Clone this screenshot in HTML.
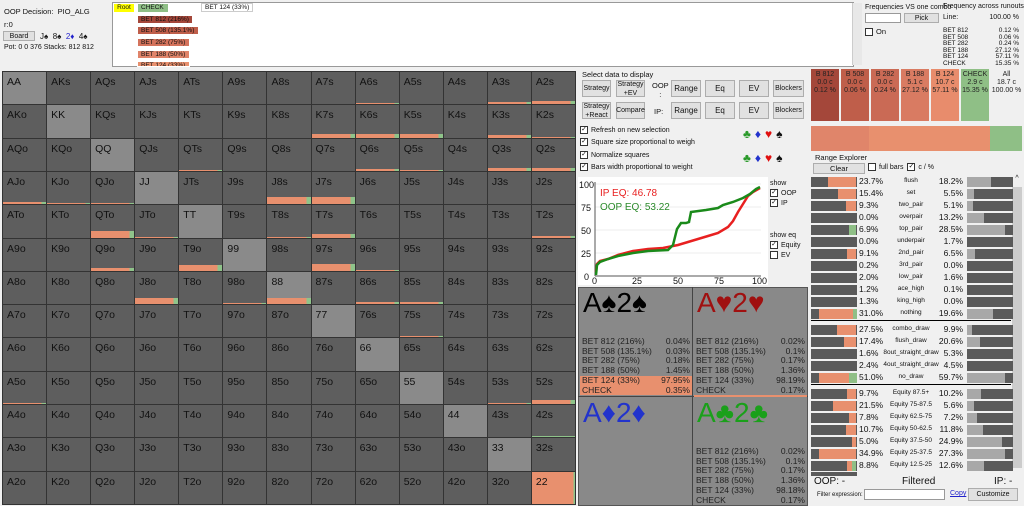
<!DOCTYPE html>
<html><head><meta charset="utf-8"><style>
*{margin:0;padding:0;box-sizing:border-box;white-space:nowrap}
body{width:1024px;height:506px;overflow:hidden;background:#f0f0f0;font-family:"Liberation Sans",sans-serif;font-size:9px;color:#111;position:relative}
.a{position:absolute}
#grid{position:absolute;left:2px;top:71px;width:574px;height:434px;background:#333;display:grid;grid-template-columns:repeat(13,1fr);grid-template-rows:repeat(13,1fr);gap:1px;border:1px solid #333}
#grid div{background:#5e5e5e;position:relative;font-size:10.5px;padding:4px 0 0 4px;color:#111}
#grid div.p{background:#8a8a8a}
#grid i{position:absolute;left:0;right:0;bottom:0;background:linear-gradient(to right,#e8906e 0 90%,#8fc48a 90%)}
.btn{position:absolute;background:#e1e1e1;border:1px solid #adadad;font-size:8px;text-align:center;display:flex;align-items:center;justify-content:center;line-height:9px}
.cb{display:inline-block;width:8px;height:8px;border:1px solid #333;background:#fff;vertical-align:middle;margin-right:3px;font-size:7px;line-height:6px;text-align:center}
.col{position:absolute;top:69px;height:52px;width:28px;text-align:center;font-size:7px;line-height:8px;padding-top:2px;color:#222;overflow:hidden}
.re{position:absolute;left:811px;width:200px;height:11px;font-size:8.5px}
.re .l{position:absolute;left:0;top:1px;width:46px;height:10px;background:#5a5a5a}
.re .r{position:absolute;left:156px;top:1px;width:46px;height:10px;background:#5a5a5a}
.re .t1{position:absolute;left:48px;top:0}
.re .t2{position:absolute;left:75px;width:50px;text-align:center;top:1px;font-size:6.5px;display:flex;justify-content:center}
.re .t3{position:absolute;right:48px;top:0}
.card{position:absolute;font-size:8.5px;color:#222;line-height:9.7px}
.card div{display:flex;justify-content:space-between;padding:0 2px 0 2px}
.tb{position:absolute;height:9px;border:1px solid #fff;font-size:6.5px;padding-left:3px;line-height:8px;overflow:hidden}
</style></head><body>
<!-- header -->
<div class="a" style="left:4px;top:7px;font-size:7.5px">OOP Decision:&nbsp; PIO_ALG</div>
<div class="a" style="left:4px;top:20px;font-size:7.5px">r:0</div>
<div class="btn" style="left:3px;top:31px;width:32px;height:10px;font-size:7px">Board</div>
<div class="a" style="left:40px;top:32px;font-size:8px">J♠&nbsp; 8♠&nbsp; <span style="color:#22c">2♦</span>&nbsp; 4♠</div>
<div class="a" style="left:4px;top:44px;font-size:7px">Pot: 0 0 376 Stacks: 812 812</div>
<div class="a" style="left:112px;top:2px;width:742px;height:65px;background:#fff;border:1px solid #999"></div>
<div class="a" style="left:114px;top:4px;width:20px;height:8px;background:#ff0;font-size:6.5px;text-align:center;line-height:8px">Root</div>
<div class="a" style="left:138px;top:4px;width:30px;height:8px;background:#8fbf86;font-size:6.5px;padding-left:3px;line-height:8px">CHECK</div>
<div class="a" style="left:201px;top:3px;width:52px;height:9px;background:#fff;border:1px solid #ccc;font-size:6.5px;padding-left:3px;line-height:8px">BET 124 (33%)</div>
<div class="tb" style="left:137px;top:15px;width:56px;background:#a4473a">BET 812 (216%)</div>
<div class="tb" style="left:137px;top:26px;width:62px;background:#bf5e4a">BET 508 (135.1%)</div>
<div class="tb" style="left:137px;top:38px;width:53px;background:#d4735c">BET 282 (75%)</div>
<div class="tb" style="left:137px;top:50px;width:53px;background:#e0846a">BET 188 (50%)</div>
<div class="tb" style="left:137px;top:61px;width:53px;height:6px;background:#e8906e">BET 124 (33%)</div>
<div class="a" style="left:852px;top:3px;width:10px;height:62px;background:#e8e8e8;border-left:1px solid #ccc"></div>
<div class="a" style="left:865px;top:4px;font-size:7px">Frequencies VS one combo</div>
<div class="a" style="left:865px;top:13px;width:36px;height:10px;background:#fff;border:1px solid #999"></div>
<div class="btn" style="left:904px;top:13px;width:35px;height:10px;font-size:7px">Pick</div>
<div class="a" style="left:865px;top:27px;font-size:7.5px"><span class="cb"></span>On</div>
<div class="a" style="left:943px;top:3px;font-size:7px">Frequency across runouts:</div>
<div class="a" style="left:943px;top:14px;width:76px;font-size:7px;display:flex;justify-content:space-between"><span>Line:</span><span>100.00 %</span></div>
<div class="a" style="left:943px;top:28px;width:76px;font-size:6.5px;line-height:6.5px">
<div style="display:flex;justify-content:space-between"><span>BET 812</span><span>0.12 %</span></div>
<div style="display:flex;justify-content:space-between"><span>BET 508</span><span>0.06 %</span></div>
<div style="display:flex;justify-content:space-between"><span>BET 282</span><span>0.24 %</span></div>
<div style="display:flex;justify-content:space-between"><span>BET 188</span><span>27.12 %</span></div>
<div style="display:flex;justify-content:space-between"><span>BET 124</span><span>57.11 %</span></div>
<div style="display:flex;justify-content:space-between"><span>CHECK</span><span>15.35 %</span></div></div>

<!-- grid -->
<div id="grid">
<div class="p">AA</div><div>AKs</div><div>AQs</div><div>AJs</div><div>ATs</div><div>A9s</div><div>A8s</div><div>A7s</div><div>A6s<i style="height:1px"></i></div><div>A5s</div><div>A4s</div><div>A3s<i style="height:2px"></i></div><div>A2s<i style="height:3px"></i></div>
<div>AKo</div><div class="p">KK</div><div>KQs</div><div>KJs</div><div>KTs</div><div>K9s</div><div>K8s</div><div>K7s<i style="height:4px"></i></div><div>K6s<i style="height:4px"></i></div><div>K5s<i style="height:4px"></i></div><div>K4s</div><div>K3s<i style="height:3px"></i></div><div>K2s<i style="height:1px"></i></div>
<div>AQo</div><div>KQo</div><div class="p">QQ</div><div>QJs</div><div>QTs<i style="height:1px"></i></div><div>Q9s</div><div>Q8s</div><div>Q7s</div><div>Q6s<i style="height:2px"></i></div><div>Q5s<i style="height:1px"></i></div><div>Q4s</div><div>Q3s<i style="height:3px"></i></div><div>Q2s<i style="height:3px"></i></div>
<div>AJo<i style="height:2px"></i></div><div>KJo<i style="height:1px"></i></div><div>QJo<i style="height:1px"></i></div><div class="p">JJ</div><div>JTs</div><div>J9s</div><div>J8s<i style="height:7px"></i></div><div>J7s<i style="height:7px"></i></div><div>J6s</div><div>J5s</div><div>J4s</div><div>J3s</div><div>J2s</div>
<div>ATo</div><div>KTo</div><div>QTo<i style="height:7px"></i></div><div>JTo<i style="height:1px"></i></div><div class="p">TT</div><div>T9s</div><div>T8s<i style="height:1px"></i></div><div>T7s<i style="height:4px"></i></div><div>T6s</div><div>T5s</div><div>T4s</div><div>T3s</div><div>T2s<i style="height:2px"></i></div>
<div>A9o</div><div>K9o</div><div>Q9o<i style="height:3px"></i></div><div>J9o</div><div>T9o<i style="height:6px"></i></div><div class="p">99</div><div>98s</div><div>97s<i style="height:7px"></i></div><div>96s<i style="height:1px"></i></div><div>95s</div><div>94s</div><div>93s</div><div>92s</div>
<div>A8o</div><div>K8o</div><div>Q8o</div><div>J8o<i style="height:6px"></i></div><div>T8o</div><div>98o<i style="height:1px"></i></div><div class="p">88<i style="height:6px"></i></div><div>87s</div><div>86s<i style="height:2px"></i></div><div>85s<i style="height:2px"></i></div><div>84s</div><div>83s</div><div>82s</div>
<div>A7o</div><div>K7o</div><div>Q7o</div><div>J7o</div><div>T7o</div><div>97o</div><div>87o</div><div class="p">77</div><div>76s</div><div>75s<i style="height:1px"></i></div><div>74s</div><div>73s</div><div>72s</div>
<div>A6o</div><div>K6o</div><div>Q6o</div><div>J6o</div><div>T6o</div><div>96o</div><div>86o</div><div>76o</div><div class="p">66</div><div>65s</div><div>64s</div><div>63s</div><div>62s</div>
<div>A5o<i style="height:1px"></i></div><div>K5o</div><div>Q5o</div><div>J5o</div><div>T5o</div><div>95o</div><div>85o</div><div>75o</div><div>65o</div><div class="p">55</div><div>54s</div><div>53s<i style="height:1px"></i></div><div>52s<i style="height:4px"></i></div>
<div>A4o</div><div>K4o</div><div>Q4o</div><div>J4o</div><div>T4o</div><div>94o</div><div>84o</div><div>74o</div><div>64o</div><div>54o</div><div class="p">44</div><div>43s</div><div>42s<i style="height:1px;background:#8fc48a"></i></div>
<div>A3o</div><div>K3o</div><div>Q3o</div><div>J3o</div><div>T3o</div><div>93o</div><div>83o</div><div>73o</div><div>63o</div><div>53o</div><div>43o</div><div class="p">33</div><div>32s</div>
<div>A2o</div><div>K2o</div><div>Q2o</div><div>J2o</div><div>T2o</div><div>92o</div><div>82o</div><div>72o</div><div>62o</div><div>52o</div><div>42o</div><div>32o</div><div style="background:linear-gradient(to right,#e8906e 0 96%,#8fc48a 96%)">22</div>
</div>

<!-- middle panel -->
<div class="a" style="left:582px;top:70px;font-size:7.5px">Select data to display</div>
<div class="btn" style="left:582px;top:80px;width:29px;height:17px;font-size:7px">Strategy</div>
<div class="btn" style="left:616px;top:80px;width:29px;height:17px;font-size:7px">Strategy<br>+EV</div>
<div class="a" style="left:652px;top:81px;font-size:7.5px;text-align:center">OOP<br>:</div>
<div class="btn" style="left:671px;top:80px;width:30px;height:17px">Range</div>
<div class="btn" style="left:705px;top:80px;width:30px;height:17px">Eq</div>
<div class="btn" style="left:739px;top:80px;width:30px;height:17px">EV</div>
<div class="btn" style="left:773px;top:80px;width:31px;height:17px;font-size:7px">Blockers</div>
<div class="btn" style="left:582px;top:102px;width:29px;height:17px;font-size:7px">Strategy<br>+React</div>
<div class="btn" style="left:616px;top:102px;width:29px;height:17px;font-size:7px">Compare</div>
<div class="a" style="left:654px;top:107px;font-size:7.5px">IP:</div>
<div class="btn" style="left:671px;top:102px;width:30px;height:17px">Range</div>
<div class="btn" style="left:705px;top:102px;width:30px;height:17px">Eq</div>
<div class="btn" style="left:739px;top:102px;width:30px;height:17px">EV</div>
<div class="btn" style="left:773px;top:102px;width:31px;height:17px;font-size:7px">Blockers</div>
<div class="a" style="left:580px;top:125px;font-size:7px;line-height:12.3px">
<div><span class="cb">✓</span>Refresh on new selection</div>
<div><span class="cb">✓</span>Square size proportional to weigh</div>
<div><span class="cb">✓</span>Normalize squares</div>
<div><span class="cb">✓</span>Bars width proportional to weight</div></div>
<div class="a" style="left:743px;top:127px;font-size:12px;letter-spacing:4px"><span style="color:#2a9a2a">♣</span><span style="color:#2233cc">♦</span><span style="color:#e01010">♥</span><span>♠</span></div>
<div class="a" style="left:743px;top:151px;font-size:12px;letter-spacing:4px"><span style="color:#2a9a2a">♣</span><span style="color:#2233cc">♦</span><span style="color:#e01010">♥</span><span>♠</span></div>
<svg class="a" style="left:578px;top:177px" width="190" height="108">
<rect width="190" height="108" fill="#fff"/>
<g stroke="#ddd" stroke-width="0.5"><line x1="17" y1="7" x2="183" y2="7"/><line x1="17" y1="30" x2="183" y2="30"/><line x1="17" y1="53" x2="183" y2="53"/><line x1="17" y1="76" x2="183" y2="76"/></g>
<line x1="17" y1="5" x2="17" y2="99" stroke="#555"/><line x1="17" y1="99" x2="183" y2="99" stroke="#555"/>
<g font-size="9" fill="#111" font-family="Liberation Sans"><text x="1" y="11">100</text><text x="3" y="34">75</text><text x="3" y="57">50</text><text x="3" y="80">25</text><text x="6" y="103">0</text>
<text x="14" y="107">0</text><text x="54" y="107">25</text><text x="95" y="107">50</text><text x="136" y="107">75</text><text x="174" y="107">100</text></g>
<polyline fill="none" stroke="#e82020" stroke-width="2.5" points="18,95 19,87 22,84 30,82 40,78 55,74 70,72 85,71 100,68 110,65 120,62 130,59 140,56 150,50 155,44 160,35 165,27 170,19 175,15 182,11"/>
<polyline fill="none" stroke="#1a8a1a" stroke-width="2.5" points="18,98 19,88 22,85 30,82 40,79 55,76 70,74 90,73 95,68 99,52 103,46 108,46 111,45 113,35 128,33 140,31 145,28 155,25 165,21 172,17 178,12 182,10"/>
<text x="22" y="19" font-size="10" fill="#e82020" font-family="Liberation Sans">IP EQ: 46.78</text>
<text x="22" y="33" font-size="10" fill="#2a8a2a" font-family="Liberation Sans">OOP EQ: 53.22</text>
</svg>
<div class="a" style="left:770px;top:179px;font-size:7px;line-height:10px">show<br><span class="cb">✓</span>OOP<br><span class="cb">✓</span>IP</div>
<div class="a" style="left:770px;top:231px;font-size:7px;line-height:10px">show eq<br><span class="cb">✓</span>Equity<br><span class="cb"></span>EV</div>

<div class="a" style="left:578px;top:287px;width:230px;height:219px;background:#898989;border:1px solid #555"></div>
<div class="a" style="left:692px;top:287px;width:1px;height:219px;background:#444"></div>
<div class="a" style="left:578px;top:396px;width:230px;height:1px;background:#444"></div>
<div class="a" style="left:583px;top:287px;font-size:28px;color:#000">A♠2♠</div>
<div class="a" style="left:697px;top:287px;font-size:28px;color:#a01010">A♥2♥</div>
<div class="a" style="left:583px;top:397px;font-size:28px;color:#2233cc">A♦2♦</div>
<div class="a" style="left:697px;top:397px;font-size:28px;color:#1aa01a">A♣2♣</div>
<div class="card" style="left:580px;top:337px;width:112px">
<div><span>BET 812 (216%)</span><span>0.04%</span></div><div><span>BET 508 (135.1%)</span><span>0.03%</span></div><div><span>BET 282 (75%)</span><span>0.18%</span></div><div><span>BET 188 (50%)</span><span>1.45%</span></div>
<div style="background:#e8906e"><span>BET 124 (33%)</span><span>97.95%</span></div><div style="background:#e8906e"><span>CHECK</span><span>0.35%</span></div></div>
<div class="card" style="left:694px;top:337px;width:113px">
<div><span>BET 812 (216%)</span><span>0.02%</span></div><div><span>BET 508 (135.1%)</span><span>0.1%</span></div><div><span>BET 282 (75%)</span><span>0.17%</span></div><div><span>BET 188 (50%)</span><span>1.36%</span></div>
<div><span>BET 124 (33%)</span><span>98.19%</span></div><div style="border-bottom:2px solid #e8906e"><span>CHECK</span><span>0.17%</span></div></div>
<div class="card" style="left:694px;top:447px;width:113px">
<div><span>BET 812 (216%)</span><span>0.02%</span></div><div><span>BET 508 (135.1%)</span><span>0.1%</span></div><div><span>BET 282 (75%)</span><span>0.17%</span></div><div><span>BET 188 (50%)</span><span>1.36%</span></div>
<div><span>BET 124 (33%)</span><span>98.18%</span></div><div><span>CHECK</span><span>0.17%</span></div></div>

<!-- right panel -->
<div class="col" style="left:811px;background:#a4473a">B 812<br>0.0 c<br>0.12 %</div>
<div class="col" style="left:841px;background:#bf5e4a">B 508<br>0.0 c<br>0.06 %</div>
<div class="col" style="left:871px;background:#ca6a55">B 282<br>0.0 c<br>0.24 %</div>
<div class="col" style="left:901px;background:#d97b62">B 188<br>5.1 c<br>27.12 %</div>
<div class="col" style="left:931px;background:#e88c6c">B 124<br>10.7 c<br>57.11 %</div>
<div class="col" style="left:961px;background:#8fbf86">CHECK<br>2.9 c<br>15.35 %</div>
<div class="col" style="left:991px;width:31px;background:#f0f0f0">All<br>18.7 c<br>100.00 %</div>
<div class="a" style="left:811px;top:126px;width:58px;height:25px;background:#e0856a"></div>
<div class="a" style="left:869px;top:126px;width:121px;height:25px;background:#e8906e"></div>
<div class="a" style="left:990px;top:126px;width:32px;height:25px;background:#8fbf86"></div>
<div class="a" style="left:815px;top:153px;font-size:7.5px">Range Explorer</div>
<div class="btn" style="left:813px;top:163px;width:52px;height:11px;font-size:7.5px">Clear</div>
<div class="a" style="left:868px;top:163px;font-size:7px"><span class="cb"></span>full bars&nbsp; <span class="cb">✓</span>c / %</div>
<div class="a" style="left:1012px;top:175px;width:10px;height:293px;background:#ccc"></div>
<div class="a" style="left:1012px;top:175px;width:10px;height:12px;background:#f0f0f0;font-size:7px;text-align:center">^</div>

<div class="re" style="top:176px"><div class="l"><div class="a" style="left:17px;top:0;width:28px;height:10px;background:#e8906e"></div></div><span class="t1">23.7%</span><span class="t2">flush</span><span class="t3">18.2%</span><div class="r"><div class="a" style="left:0;top:0;width:24px;height:10px;background:#a8a8a8"></div></div></div>
<div class="re" style="top:188px"><div class="l"><div class="a" style="left:27px;top:0;width:18px;height:10px;background:#e8906e"></div></div><span class="t1">15.4%</span><span class="t2">set</span><span class="t3">5.5%</span><div class="r"><div class="a" style="left:0;top:0;width:7px;height:10px;background:#a8a8a8"></div></div></div>
<div class="re" style="top:200px"><div class="l"><div class="a" style="left:35px;top:0;width:10px;height:10px;background:#e8906e"></div></div><span class="t1">9.3%</span><span class="t2">two_pair</span><span class="t3">5.1%</span><div class="r"><div class="a" style="left:0;top:0;width:6px;height:10px;background:#a8a8a8"></div></div></div>
<div class="re" style="top:212px"><div class="l"></div><span class="t1">0.0%</span><span class="t2">overpair</span><span class="t3">13.2%</span><div class="r"><div class="a" style="left:0;top:0;width:17px;height:10px;background:#a8a8a8"></div></div></div>
<div class="re" style="top:224px"><div class="l"><div class="a" style="left:38px;top:0;width:7px;height:10px;background:#8fbf86"></div></div><span class="t1">6.9%</span><span class="t2">top_pair</span><span class="t3">28.5%</span><div class="r"><div class="a" style="left:0;top:0;width:38px;height:10px;background:#a8a8a8"></div></div></div>
<div class="re" style="top:236px"><div class="l"></div><span class="t1">0.0%</span><span class="t2">underpair</span><span class="t3">1.7%</span><div class="r"></div></div>
<div class="re" style="top:248px"><div class="l"><div class="a" style="left:36px;top:0;width:9px;height:10px;background:#e8906e"></div></div><span class="t1">9.1%</span><span class="t2">2nd_pair</span><span class="t3">6.5%</span><div class="r"><div class="a" style="left:0;top:0;width:8px;height:10px;background:#a8a8a8"></div></div></div>
<div class="re" style="top:260px"><div class="l"></div><span class="t1">0.2%</span><span class="t2">3rd_pair</span><span class="t3">0.0%</span><div class="r"></div></div>
<div class="re" style="top:272px"><div class="l"></div><span class="t1">2.0%</span><span class="t2">low_pair</span><span class="t3">1.6%</span><div class="r"></div></div>
<div class="re" style="top:284px"><div class="l"></div><span class="t1">1.2%</span><span class="t2">ace_high</span><span class="t3">0.1%</span><div class="r"></div></div>
<div class="re" style="top:296px"><div class="l"></div><span class="t1">1.3%</span><span class="t2">king_high</span><span class="t3">0.0%</span><div class="r"></div></div>
<div class="re" style="top:308px"><div class="l"><div class="a" style="left:8px;top:0;width:34px;height:10px;background:#e8906e"></div><div class="a" style="left:42px;top:0;width:4px;height:10px;background:#8fbf86"></div></div><span class="t1">31.0%</span><span class="t2">nothing</span><span class="t3">19.6%</span><div class="r"><div class="a" style="left:0;top:0;width:26px;height:10px;background:#a8a8a8"></div></div></div>
<div class="a" style="left:811px;top:320px;width:200px;height:1px;background:#000"></div>
<div class="re" style="top:324px"><div class="l"><div class="a" style="left:26px;top:0;width:19px;height:10px;background:#e8906e"></div></div><span class="t1">27.5%</span><span class="t2">combo_draw</span><span class="t3">9.9%</span><div class="r"><div class="a" style="left:0;top:0;width:5px;height:10px;background:#a8a8a8"></div></div></div>
<div class="re" style="top:336px"><div class="l"><div class="a" style="left:33px;top:0;width:12px;height:10px;background:#e8906e"></div></div><span class="t1">17.4%</span><span class="t2">flush_draw</span><span class="t3">20.6%</span><div class="r"><div class="a" style="left:0;top:0;width:13px;height:10px;background:#a8a8a8"></div></div></div>
<div class="re" style="top:348px"><div class="l"></div><span class="t1">1.6%</span><span class="t2">8out_straight_draw</span><span class="t3">5.3%</span><div class="r"></div></div>
<div class="re" style="top:360px"><div class="l"></div><span class="t1">2.4%</span><span class="t2">4out_straight_draw</span><span class="t3">4.5%</span><div class="r"></div></div>
<div class="re" style="top:372px"><div class="l"><div class="a" style="left:8px;top:0;width:30px;height:10px;background:#e8906e"></div><div class="a" style="left:38px;top:0;width:8px;height:10px;background:#8fbf86"></div></div><span class="t1">51.0%</span><span class="t2">no_draw</span><span class="t3">59.7%</span><div class="r"><div class="a" style="left:0;top:0;width:38px;height:10px;background:#a8a8a8"></div></div></div>
<div class="a" style="left:811px;top:384px;width:200px;height:1px;background:#000"></div>
<div class="re" style="top:388px"><div class="l"><div class="a" style="left:36px;top:0;width:9px;height:10px;background:#e8906e"></div></div><span class="t1">9.7%</span><span class="t2">Equity 87.5+</span><span class="t3">10.2%</span><div class="r"><div class="a" style="left:0;top:0;width:14px;height:10px;background:#a8a8a8"></div></div></div>
<div class="re" style="top:400px"><div class="l"><div class="a" style="left:22px;top:0;width:23px;height:10px;background:#e8906e"></div></div><span class="t1">21.5%</span><span class="t2">Equity 75-87.5</span><span class="t3">5.6%</span><div class="r"><div class="a" style="left:0;top:0;width:7px;height:10px;background:#a8a8a8"></div></div></div>
<div class="re" style="top:412px"><div class="l"><div class="a" style="left:38px;top:0;width:7px;height:10px;background:#e8906e"></div></div><span class="t1">7.8%</span><span class="t2">Equity 62.5-75</span><span class="t3">7.2%</span><div class="r"><div class="a" style="left:0;top:0;width:10px;height:10px;background:#a8a8a8"></div></div></div>
<div class="re" style="top:424px"><div class="l"><div class="a" style="left:35px;top:0;width:10px;height:10px;background:#e8906e"></div></div><span class="t1">10.7%</span><span class="t2">Equity 50-62.5</span><span class="t3">11.8%</span><div class="r"><div class="a" style="left:0;top:0;width:16px;height:10px;background:#a8a8a8"></div></div></div>
<div class="re" style="top:436px"><div class="l"><div class="a" style="left:41px;top:0;width:4px;height:10px;background:#e8906e"></div></div><span class="t1">5.0%</span><span class="t2">Equity 37.5-50</span><span class="t3">24.9%</span><div class="r"><div class="a" style="left:0;top:0;width:35px;height:10px;background:#a8a8a8"></div></div></div>
<div class="re" style="top:448px"><div class="l"><div class="a" style="left:8px;top:0;width:37px;height:10px;background:#e8906e"></div></div><span class="t1">34.9%</span><span class="t2">Equity 25-37.5</span><span class="t3">27.3%</span><div class="r"><div class="a" style="left:0;top:0;width:38px;height:10px;background:#a8a8a8"></div></div></div>
<div class="re" style="top:460px"><div class="l"><div class="a" style="left:36px;top:0;width:5px;height:10px;background:#e8906e"></div><div class="a" style="left:41px;top:0;width:4px;height:10px;background:#8fbf86"></div></div><span class="t1">8.8%</span><span class="t2">Equity 12.5-25</span><span class="t3">12.6%</span><div class="r"><div class="a" style="left:0;top:0;width:17px;height:10px;background:#a8a8a8"></div></div></div>
<div class="a" style="left:811px;top:472px;width:200px;height:4px;overflow:hidden"><div style="width:46px;height:4px;background:#5a5a5a"></div></div>
<div class="a" style="left:810px;top:476px;width:213px;height:30px;background:#f0f0f0"></div>
<div class="a" style="left:814px;top:476px;font-size:10px">OOP: -</div>
<div class="a" style="left:902px;top:476px;font-size:10px">Filtered</div>
<div class="a" style="left:994px;top:476px;font-size:10px">IP: -</div>
<div class="a" style="left:817px;top:492px;font-size:6px">Filter expression:</div>
<div class="a" style="left:864px;top:489px;width:81px;height:11px;background:#fff;border:1px solid #999"></div>
<div class="a" style="left:950px;top:490px;font-size:7px;color:#22c;text-decoration:underline">Copy</div>
<div class="btn" style="left:968px;top:488px;width:50px;height:13px;font-size:7px">Customize</div>
</body></html>
